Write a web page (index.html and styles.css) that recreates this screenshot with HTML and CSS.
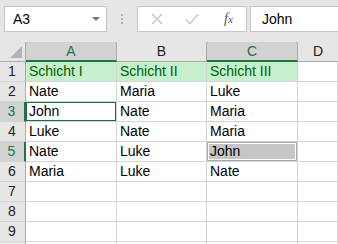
FILE: index.html
```html
<!DOCTYPE html>
<html>
<head>
<meta charset="utf-8">
<link rel="stylesheet" href="styles.css">
</head>
<body>
<div class="toolbar">
  <div class="namebox"><span class="nb-text">A3</span><span class="nb-arrow"></span></div>
  <div class="dots"><i></i><i></i><i></i></div>
  <div class="fbuttons">
    <svg class="ic-x" width="12" height="12" viewBox="0 0 12 12"><path d="M1 1L11 11M11 1L1 11" stroke="#c3c3c3" stroke-width="1.4" fill="none"/></svg>
    <svg class="ic-check" width="14" height="12" viewBox="0 0 14 12"><path d="M1 6.5L5 10.5L13 1.5" stroke="#c3c3c3" stroke-width="1.4" fill="none"/></svg>
    <span class="fx">f<span class="fx-x">x</span></span>
  </div>
  <div class="formula">John</div>
</div>
<div class="sheet">
  <div class="corner"><span class="tri"></span></div>
  <div class="ch sel">A</div>
  <div class="ch">B</div>
  <div class="ch sel">C</div>
  <div class="ch last">D</div>

  <div class="rh">1</div>
  <div class="c good">Schicht I</div>
  <div class="c good">Schicht II</div>
  <div class="c good">Schicht III</div>
  <div class="c"></div>

  <div class="rh">2</div>
  <div class="c">Nate</div>
  <div class="c">Maria</div>
  <div class="c">Luke</div>
  <div class="c"></div>

  <div class="rh sel">3</div>
  <div class="c active">John</div>
  <div class="c">Nate</div>
  <div class="c">Maria</div>
  <div class="c"></div>

  <div class="rh">4</div>
  <div class="c">Luke</div>
  <div class="c">Nate</div>
  <div class="c">Maria</div>
  <div class="c"></div>

  <div class="rh sel">5</div>
  <div class="c">Nate</div>
  <div class="c">Luke</div>
  <div class="c range">John</div>
  <div class="c"></div>

  <div class="rh">6</div>
  <div class="c">Maria</div>
  <div class="c">Luke</div>
  <div class="c">Nate</div>
  <div class="c"></div>

  <div class="rh">7</div>
  <div class="c"></div><div class="c"></div><div class="c"></div><div class="c"></div>
  <div class="rh">8</div>
  <div class="c"></div><div class="c"></div><div class="c"></div><div class="c"></div>
  <div class="rh">9</div>
  <div class="c"></div><div class="c"></div><div class="c"></div><div class="c"></div>
  <div class="rh"></div>
  <div class="c"></div><div class="c"></div><div class="c"></div><div class="c"></div>
</div>
</body>
</html>
```
FILE: styles.css
```css
html, body {
  margin: 0;
  padding: 0;
  background: #ffffff;
  overflow: hidden;
}
body {
  width: 338px;
  height: 244px;
  font-family: "Liberation Sans", Arial, sans-serif;
  font-size: 14px;
  color: #000;
}
.toolbar {
  height: 42px;
  background: #e6e6e6;
  display: flex;
  align-items: flex-start;
  padding-top: 6px;
  padding-left: 4px;
  box-sizing: border-box;
}
.namebox {
  width: 103px;
  height: 26px;
  box-sizing: border-box;
  border: 1px solid #c6c6c6;
  background: #fff;
  display: flex;
  align-items: center;
  justify-content: space-between;
  padding: 0 6px 0 8px;
}
.nb-text { font-size: 14px; }
.nb-arrow {
  width: 0; height: 0;
  border-left: 4px solid transparent;
  border-right: 4px solid transparent;
  border-top: 4px solid #777;
}
.dots {
  width: 30px;
  height: 26px;
  display: flex;
  flex-direction: column;
  align-items: center;
  justify-content: center;
  gap: 2px;
}
.dots i {
  display: block;
  width: 2px;
  height: 2px;
  background: #b4b4b4;
}
.fbuttons {
  width: 110px;
  height: 26px;
  box-sizing: border-box;
  border: 1px solid #c6c6c6;
  background: #fff;
  display: flex;
  align-items: center;
  padding-left: 13px;
}
.ic-x { margin-right: 22px; }
.ic-check { margin-right: 25px; }
.fx {
  font-family: "Liberation Serif", serif;
  font-style: italic;
  font-size: 14px;
  color: #555;
}
.fx-x { font-size: 11px; }
.formula {
  margin-left: 3px;
  flex: 1;
  height: 26px;
  box-sizing: border-box;
  border: 1px solid #c6c6c6;
  border-right: none;
  background: #fff;
  display: flex;
  align-items: center;
  padding-left: 11px;
}
.sheet {
  display: grid;
  grid-template-columns: 26px 91px 90px 91px 1fr;
  grid-auto-rows: 20px;
  grid-template-rows: 20px;
}
.corner {
  background: #e6e6e6;
  border-right: 1px solid #ababab;
  border-bottom: 1px solid #ababab;
  box-sizing: border-box;
  position: relative;
}
.tri {
  position: absolute;
  right: 3px;
  bottom: 3px;
  width: 0; height: 0;
  border-left: 12px solid transparent;
  border-bottom: 12px solid #b4b4b4;
}
.ch {
  background: #e6e6e6;
  border-right: 1px solid #ababab;
  border-bottom: 1px solid #ababab;
  box-sizing: border-box;
  text-align: center;
  line-height: 19px;
  color: #222;
}
.ch.last { border-right: none; }
.ch.sel {
  background: #d2d2d2;
  color: #217346;
  border-bottom: 2px solid #217346;
  line-height: 18px;
}
.rh {
  background: #e6e6e6;
  border-right: 1px solid #ababab;
  border-bottom: 1px solid #d4d4d4;
  box-sizing: border-box;
  text-align: center;
  line-height: 19px;
  color: #222;
  padding-right: 1px;
}
.rh.sel {
  background: #d2d2d2;
  color: #217346;
  border-right: 2px solid #217346;
}
.c {
  border-right: 1px solid #d4d4d4;
  border-bottom: 1px solid #d4d4d4;
  box-sizing: border-box;
  padding-left: 3px;
  line-height: 19px;
  white-space: nowrap;
  overflow: hidden;
}
.c.good {
  background: #c6efce;
  color: #006100;
}
.c.active {
  box-shadow: inset 0 0 0 1px #1e6b41;
  padding-left: 3px;
}
.c.range {
  background: #c6c6c6;
  box-shadow: inset 0 0 0 1px #a6a6a6, inset 0 0 0 2px #ffffff;
}
```
